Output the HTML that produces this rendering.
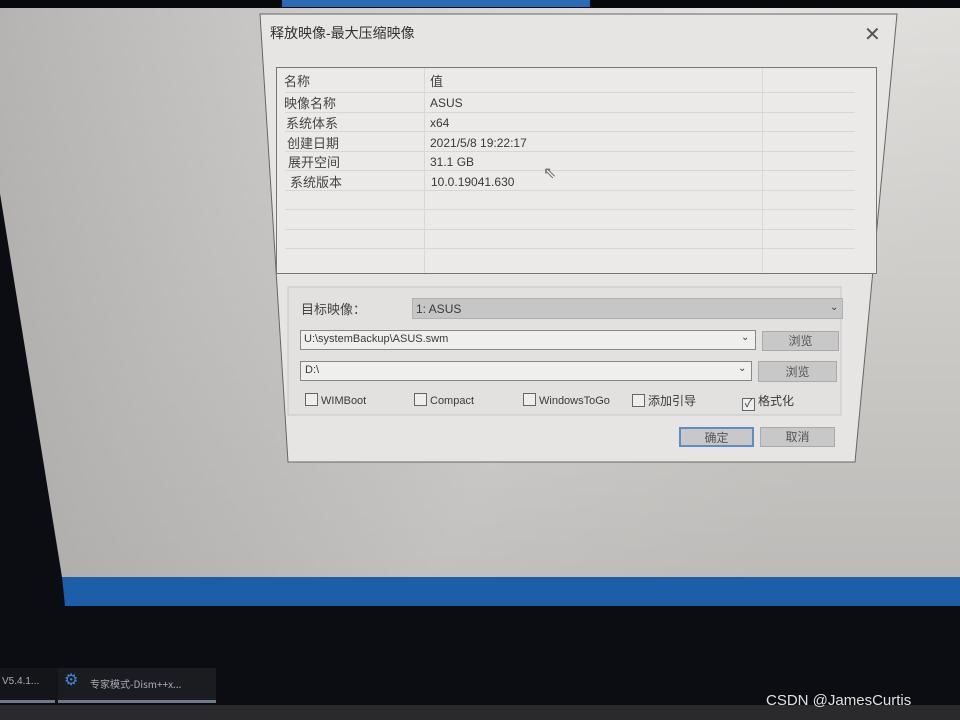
<!DOCTYPE html>
<html><head><meta charset="utf-8"><style>
*{margin:0;padding:0;box-sizing:border-box}
body{width:960px;height:720px;overflow:hidden;background:#0b0d12;position:relative;font-family:"Liberation Sans","Noto Sans CJK SC",sans-serif;color:#333}
.a{position:absolute}
.t{font-size:12px;color:#3a3a3a;white-space:nowrap}
.c{font-size:13px;color:#444;white-space:nowrap}
.cb{display:inline-block;width:13px;height:13px;border:1px solid #666;vertical-align:-2px;margin-right:3px;background:#eee}
.btn{background:#c8c8c8;border:1px solid #aaa;font-size:12px;text-align:center;color:#555;font-family:"Noto Sans CJK SC",sans-serif}
.hl{height:1px;background:#d6d6d4}
</style></head><body>
<svg class="a" style="left:0;top:0" width="960" height="720">
<defs>
<linearGradient id="g" x1="0" y1="0" x2="1" y2="0.3">
<stop offset="0" stop-color="#b4b2b0"/><stop offset="0.35" stop-color="#cfcdcb"/><stop offset="0.7" stop-color="#e4e2e0"/><stop offset="1" stop-color="#dedcd9"/></linearGradient>
<linearGradient id="v" x1="0" y1="0" x2="0" y2="1"><stop offset="0" stop-color="#000" stop-opacity="0"/><stop offset="1" stop-color="#000" stop-opacity="0.15"/></linearGradient>
</defs>
<rect x="0" y="0" width="960" height="8" fill="#06080c"/>
<rect x="282" y="0" width="308" height="7" fill="#2a6bb8"/>
<polygon points="-30,8 960,8 960,577 62,577" fill="url(#g)"/>
<polygon points="-30,8 960,8 960,577 62,577" fill="url(#v)"/>
<polygon points="62,577 960,577 960,606 65,606" fill="#1c5ea8"/>
<polygon points="260,14 897,14 855,462 288,462" fill="#e6e5e3" stroke="#666" stroke-width="1"/>
<rect x="288" y="287" width="553" height="128" fill="#e2e1df" stroke="#c8c8c8"/>
<rect x="0" y="705" width="960" height="15" fill="#2a2a2c"/>
<rect x="0" y="668" width="58" height="34" fill="#141518"/>
<rect x="58" y="668" width="158" height="34" fill="#1b1c20"/>
<rect x="58" y="700" width="158" height="3" fill="#6c7a8a"/>
<rect x="0" y="700" width="55" height="3" fill="#6c7a8a"/>
</svg>
<div class="a c" style="left:270px;top:23px;font-size:14px;color:#333">释放映像-最大压缩映像</div>
<div class="a" style="left:864px;top:22px;font-size:20px;color:#555">✕</div>
<div class="a" style="left:276px;top:67px;width:601px;height:207px;border:1px solid #777;background:#ebeae8"></div>
<div class="a" style="left:424px;top:68px;width:1px;height:205px;background:#d8d8d6"></div>
<div class="a" style="left:762px;top:68px;width:1px;height:205px;background:#d8d8d6"></div>
<div class="a hl" style="left:285px;top:92px;width:570px"></div>
<div class="a hl" style="left:285px;top:112px;width:570px"></div>
<div class="a hl" style="left:285px;top:131px;width:570px"></div>
<div class="a hl" style="left:285px;top:151px;width:570px"></div>
<div class="a hl" style="left:285px;top:170px;width:570px"></div>
<div class="a hl" style="left:285px;top:190px;width:570px"></div>
<div class="a hl" style="left:285px;top:209px;width:570px"></div>
<div class="a hl" style="left:285px;top:229px;width:570px"></div>
<div class="a hl" style="left:285px;top:248px;width:570px"></div>
<div class="a c" style="left:284px;top:71px">名称</div>
<div class="a c" style="left:284px;top:93px">映像名称</div>
<div class="a c" style="left:286px;top:113px">系统体系</div>
<div class="a c" style="left:287px;top:133px">创建日期</div>
<div class="a c" style="left:288px;top:152px">展开空间</div>
<div class="a c" style="left:290px;top:172px">系统版本</div>
<div class="a c" style="left:430px;top:71px">值</div>
<div class="a t" style="left:430px;top:96px">ASUS</div>
<div class="a t" style="left:430px;top:116px">x64</div>
<div class="a t" style="left:430px;top:136px">2021/5/8 19:22:17</div>
<div class="a t" style="left:430px;top:155px">31.1 GB</div>
<div class="a t" style="left:431px;top:175px">10.0.19041.630</div>
<div class="a" style="left:543px;top:163px;font-size:16px;color:#666">⇖</div>
<div class="a c" style="left:301px;top:299px">目标映像：</div>
<div class="a" style="left:412px;top:298px;width:431px;height:21px;background:#c6c6c6;border:1px solid #b0b0b0"></div>
<div class="a t" style="left:416px;top:302px;font-size:12px">1: ASUS</div>
<div class="a t" style="left:830px;top:302px;font-size:10px">⌄</div>
<div class="a" style="left:300px;top:330px;width:456px;height:20px;background:#efefed;border:1px solid #888"></div>
<div class="a t" style="left:304px;top:333px;font-size:11px">U:\systemBackup\ASUS.swm</div>
<div class="a t" style="left:741px;top:332px;font-size:10px">⌄</div>
<div class="a btn" style="left:762px;top:331px;width:77px;height:20px;line-height:18px">浏览</div>
<div class="a" style="left:300px;top:361px;width:452px;height:20px;background:#efefed;border:1px solid #888"></div>
<div class="a t" style="left:305px;top:364px;font-size:11px">D:\</div>
<div class="a t" style="left:738px;top:363px;font-size:10px">⌄</div>
<div class="a btn" style="left:758px;top:361px;width:79px;height:21px;line-height:19px">浏览</div>
<div class="a t" style="left:305px;top:393px;font-size:11px"><span class="cb"></span>WIMBoot</div>
<div class="a t" style="left:414px;top:393px;font-size:11px"><span class="cb"></span>Compact</div>
<div class="a t" style="left:523px;top:393px;font-size:11px"><span class="cb"></span>WindowsToGo</div>
<div class="a t" style="left:632px;top:392px;font-size:12px"><span class="cb"></span>添加引导</div>
<div class="a t" style="left:742px;top:392px;font-size:12px"><span class="cb" style="font-size:11px;line-height:11px;text-align:center">✓</span>格式化</div>
<div class="a btn" style="left:679px;top:427px;width:75px;height:20px;line-height:18px;border:2px solid #5b8dc6">确定</div>
<div class="a btn" style="left:760px;top:427px;width:75px;height:20px;line-height:18px">取消</div>
<div class="a" style="left:2px;top:676px;font-size:10px;color:#aab">V5.4.1...</div>
<div class="a" style="left:64px;top:670px;font-size:16px;color:#3f86d0">⚙</div>
<div class="a" style="left:90px;top:676px;font-size:10px;color:#aab;font-family:'Noto Sans CJK SC',sans-serif">专家模式-Dism++x...</div>
<div class="a" style="left:766px;top:692px;font-size:15px;color:#e0e0e0">CSDN @JamesCurtis</div>
</body></html>
